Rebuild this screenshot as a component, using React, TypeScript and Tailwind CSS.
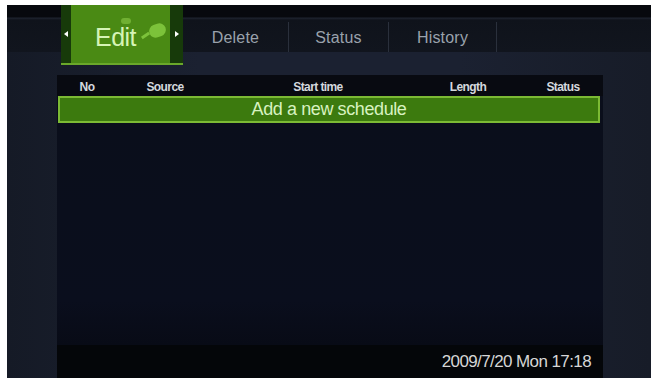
import { ReactNode } from "react";

function Tab({ label, w }: { label: string; w: string }) {
  return (
    <div className={`${w} h-[47px] pt-[17px] flex`}>
      <div className="flex-1 flex items-center justify-center border-r border-[#2a303c] pt-[2px] text-[16px] tracking-[0.2px] text-[#9aa2ac]">
        {label}
      </div>
    </div>
  );
}

function Col({ children, className }: { children: ReactNode; className: string }) {
  return <div className={`text-center font-bold tracking-[-0.6px] ${className}`}>{children}</div>;
}

export default function App() {
  return (
    <div
      className="w-[657px] h-[385px] bg-white pt-[5px] pl-[7px] pr-[6px] pb-[7px]"
      style={{ fontFamily: '"Liberation Sans", Arial, sans-serif' }}
    >
      <div className="h-full flex flex-col bg-[linear-gradient(to_right,#151a26,#1b2131_30%,#1b2131_70%,#171c28)]">
        {/* tab strip */}
        <div className="h-[60px] flex items-start bg-[linear-gradient(to_bottom,#07090e_0px,#07090e_12px,#1e2430_13px,#0f131b_15px,#11151e_47px,transparent_47px)]">
          <div className="w-[54px]" />
          <div className="w-[122px] h-[60px] flex bg-[#0d2a06] border-b-2 border-[#6aa82a]">
            <div className="w-[10px] bg-[#173a0a] flex items-center justify-center">
              <span className="w-0 h-0 border-y-[3px] border-y-transparent border-r-[4px] border-r-white" />
            </div>
            <div className="flex-1 relative flex items-center justify-center pt-[7px] bg-[#4a8a14]">
              <span className="text-[25px] tracking-[-0.5px] text-[#d6f4b6] -ml-[10px]">Edit</span>
              <span className="absolute left-[78px] top-[19px] w-[17px] h-[13px] rounded-full bg-[#7cc23a] rotate-[-20deg]" />
              <span className="absolute left-[70px] top-[29px] w-[9px] h-[3px] bg-[#7cc23a] rotate-[-35deg]" />
              <span className="absolute left-[50px] top-[13px] w-[10px] h-[6px] rounded-full bg-[#70b032]" />
            </div>
            <div className="w-[13px] bg-[#173a0a] flex items-center justify-center">
              <span className="w-0 h-0 border-y-[3px] border-y-transparent border-l-[4px] border-l-white" />
            </div>
          </div>
          <Tab label="Delete" w="w-[106px]" />
          <Tab label="Status" w="w-[100px]" />
          <Tab label="History" w="w-[108px]" />
        </div>

        {/* schedule panel */}
        <div className="flex-1 mt-[10px] ml-[50px] w-[546px] flex flex-col bg-[#0a0e1b]">
          <div className="h-[21px] flex items-end bg-[#080a11] text-[12px] text-[#d4d8de]">
            <Col className="w-[60px]">No</Col>
            <Col className="w-[96px]">Source</Col>
            <Col className="w-[210px]">Start time</Col>
            <Col className="w-[90px]">Length</Col>
            <Col className="w-[90px] pl-[10px]">Status</Col>
          </div>
          <div className="ml-[1px] mr-[3px] h-[27px] border-2 border-[#7cba34] bg-[#3c7a0e] flex items-center justify-center text-[18px] tracking-[-0.4px] text-[#d8f2c0]">
            Add a new schedule
          </div>
          <div className="flex-1 bg-[linear-gradient(to_bottom,#0a0e1b,#0a0e1d_80%,#080b16)]" />
          <div className="h-[33px] bg-[#040609] flex items-center justify-end pr-[12px] text-[17px] text-[#d6d6d6] tracking-[-0.6px]">
            2009/7/20 Mon 17:18
          </div>
        </div>
      </div>
    </div>
  );
}
